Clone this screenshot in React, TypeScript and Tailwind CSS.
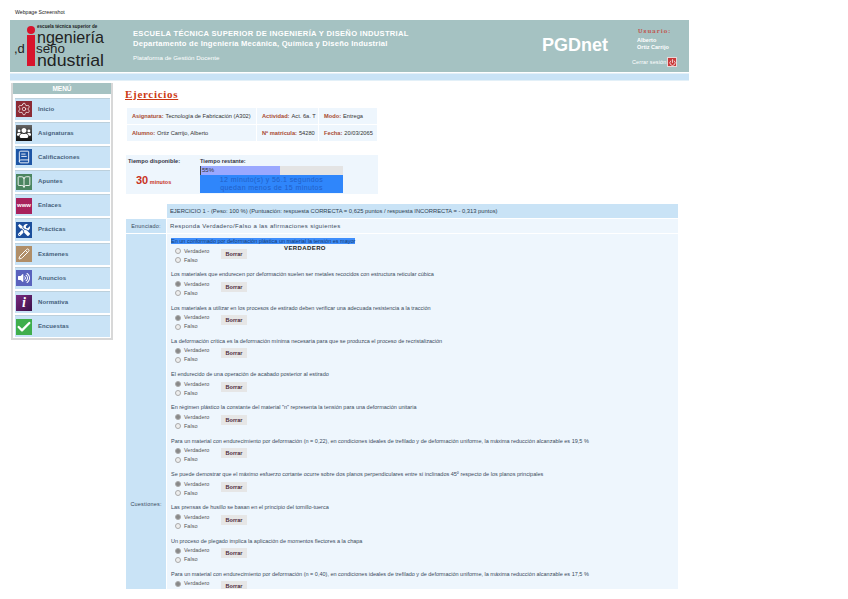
import { BookOpen, BookText, Check, Pencil, Power, Settings } from "lucide-react";
import { FaTools, FaUsers, FaVolumeUp } from "react-icons/fa";
import type { ReactNode } from "react";

const menuItems: { name: string; bg: string; icon: ReactNode }[] = [
  { name: "Inicio", bg: "bg-[#8c2b35]", icon: <Settings className="w-3.5 h-3.5 text-white/80" strokeWidth={1.5} /> },
  { name: "Asignaturas", bg: "bg-gradient-to-b from-[#666] to-[#111]", icon: <FaUsers className="w-3.5 h-3.5 text-white" /> },
  { name: "Calificaciones", bg: "bg-[#1d55a5]", icon: <BookText className="w-3.5 h-3.5 text-white" strokeWidth={1.5} /> },
  { name: "Apuntes", bg: "bg-[#4b8560]", icon: <BookOpen className="w-3.5 h-3.5 text-white" strokeWidth={1.5} /> },
  { name: "Enlaces", bg: "bg-[#a8215c]", icon: <span className="text-[6px] font-bold text-white">www</span> },
  { name: "Prácticas", bg: "bg-[#1d4f9c]", icon: <FaTools className="w-3 h-3 text-white" /> },
  { name: "Exámenes", bg: "bg-[#b08e68]", icon: <Pencil className="w-3 h-3 text-white" strokeWidth={2} /> },
  { name: "Anuncios", bg: "bg-[#5a62bd]", icon: <FaVolumeUp className="w-3 h-3 text-white" /> },
  { name: "Normativa", bg: "bg-gradient-to-br from-[#7a2a80] to-[#3c1048]", icon: <span className="font-['Liberation_Serif',serif] italic font-bold text-[14px] leading-none text-white">i</span> },
  { name: "Encuestas", bg: "bg-[#3fae4c]", icon: <Check className="w-4 h-4 text-white" strokeWidth={3.5} /> },
];

const questions = [
  "En un conformado por deformación plástica un material la tensión es mayor",
  "Los materiales que endurecen por deformación suelen ser metales recocidos con estructura reticular cúbica",
  "Los materiales a utilizar en los procesos de estirado deben verificar una adecuada resistencia a la tracción",
  "La deformación crítica es la deformación mínima necesaria para que se produzca el proceso de recristalización",
  "El endurecido de una operación de acabado posterior al estirado",
  "En régimen plástico la constante del material \"n\" representa la tensión para una deformación unitaria",
  "Para un material con endurecimiento por deformación (n = 0,22), en condiciones ideales de trefilado y de deformación uniforme, la máxima reducción alcanzable es 19,5 %",
  "Se puede demostrar que el máximo esfuerzo cortante ocurre sobre dos planos perpendiculares entre sí inclinados 45º respecto de los planos principales",
  "Las prensas de husillo se basan en el principio del tornillo-tuerca",
  "Un proceso de plegado implica la aplicación de momentos flectores a la chapa",
  "Para un material con endurecimiento por deformación (n = 0,40), en condiciones ideales de trefilado y de deformación uniforme, la máxima reducción alcanzable es 17,5 %",
];

function Logo() {
  return (
    <svg width="100" height="52" viewBox="0 0 100 52" className="shrink-0">
      <circle cx="21" cy="10" r="4" fill="#d8142c" />
      <rect x="17" y="15" width="8" height="31" fill="#d8142c" />
      <text x="27" y="8" fontSize="4.6" fontWeight="700" fill="#222" fontFamily="Liberation Sans, sans-serif">escuela técnica superior de</text>
      <text x="27" y="23" fontSize="17" textLength="67" lengthAdjust="spacingAndGlyphs" fill="#222" fontFamily="Liberation Sans, sans-serif">ngeniería</text>
      <text x="4" y="33" fontSize="13" fill="#222" fontFamily="Liberation Sans, sans-serif">,d</text>
      <text x="26" y="33" fontSize="13" textLength="29" lengthAdjust="spacingAndGlyphs" fill="#222" fontFamily="Liberation Sans, sans-serif">seño</text>
      <text x="27" y="46" fontSize="17" textLength="67" lengthAdjust="spacingAndGlyphs" fill="#222" fontFamily="Liberation Sans, sans-serif">ndustrial</text>
    </svg>
  );
}

function Header() {
  return (
    <div className="w-[679px] ml-[10px]">
      <div className="h-[52px] bg-[#a5c2c2] flex text-white">
        <div className="w-[113px] shrink-0 flex items-center">
          <Logo />
        </div>
        <div className="w-[10px] shrink-0" />
        <div className="w-[409px] shrink-0 pt-[9px]">
          <p className="text-[7.6px] leading-[10px] font-bold tracking-[0.3px] whitespace-nowrap">ESCUELA TÉCNICA SUPERIOR DE INGENIERÍA Y DISEÑO INDUSTRIAL</p>
          <p className="text-[7.6px] leading-[10px] font-bold tracking-[0.22px] whitespace-nowrap">Departamento de Ingeniería Mecánica, Química y Diseño Industrial</p>
          <p className="text-[6.2px] leading-[8px] mt-[5px] whitespace-nowrap">Plataforma de Gestión Docente</p>
        </div>
        <div className="w-[90px] shrink-0 pt-[14px] text-[18px] leading-[22px] font-bold">PGDnet</div>
        <div className="flex-1 pt-[8px] pl-[5px]">
          <p className="text-[6.5px] leading-[7px] ml-[1px] tracking-[1px] text-[#c0564f] font-serif font-bold">Usuario:</p>
          <p className="text-[5.5px] leading-[6.5px] mt-[2px] font-bold">Alberto</p>
          <p className="text-[5.5px] leading-[6.5px] font-bold">Ortiz Carrijo</p>
          <div className="flex items-center -ml-[5px] mt-[7px]">
            <span className="text-[5.5px] tracking-[0.1px] whitespace-nowrap w-[35px]">Cerrar sesión</span>
            <span className="w-[10px] h-[10px] bg-[#c93a3a] border border-[#e8d8d8] flex items-center justify-center">
              <Power className="w-[7px] h-[7px]" strokeWidth={2.5} />
            </span>
          </div>
        </div>
      </div>
      <div className="h-[8px] mt-px bg-[#c9e3f6] border-y border-[#e3f0f8]" />
    </div>
  );
}

function Sidebar() {
  return (
    <aside className="w-[102px] shrink-0 border-x-2 border-b-2 border-[#d8d8d8] h-[257px]">
      <div className="h-[11px] bg-[#a5c2c2] text-white text-[6.5px] leading-[11px] font-bold text-center">MENÚ</div>
      <div className="pl-[2px] pr-[1px] pt-[3.5px] flex flex-col gap-[2.1px]">
        {menuItems.map((item) => (
          <div key={item.name} className="h-[22.1px] bg-[#c9e3f6] border-t border-[#bcd0dc] flex items-center pl-[1px] gap-[6px]">
            <span className={`w-[16px] h-[16px] shrink-0 flex items-center justify-center ${item.bg}`}>{item.icon}</span>
            <span className="text-[6px] font-bold text-[#44607a] tracking-[0.1px]">{item.name}</span>
          </div>
        ))}
      </div>
    </aside>
  );
}

function InfoCell({ label, value, className }: { label: string; value: string; className: string }) {
  return (
    <div className={`h-[16px] bg-[#eef6fd] flex items-center pl-[5px] text-[5.7px] whitespace-nowrap ${className}`}>
      <span className="text-[#a84a30] font-bold mr-[2px]">{label}</span>
      <span className="text-[#333]">{value}</span>
    </div>
  );
}

function Timer() {
  return (
    <div className="mt-[14px] ml-[1px] w-[252px] h-[39px] bg-[#eef6fd] flex text-[5.7px]">
      <div className="w-[74px] shrink-0 pl-[2px] pt-[2px]">
        <p className="text-[#334] font-bold whitespace-nowrap">Tiempo disponible:</p>
        <p className="mt-[7px] pl-[8px] text-[#c8321e] font-bold whitespace-nowrap">
          <span className="text-[11px] leading-[14px]">30</span> <span className="text-[5.5px]">minutos</span>
        </p>
      </div>
      <div className="w-[143px] shrink-0 pt-[2px]">
        <p className="text-[#334] font-bold leading-[8px]">Tiempo restante:</p>
        <div className="h-[9px] bg-[#e4e4e4] flex mt-[1px]">
          <div className="w-[80px] h-full bg-[#9aa8ff] border-l border-[#444] text-[#333] text-[6px] leading-[8px] pl-px">55%</div>
        </div>
        <div className="h-[18px] bg-[#2f86fb] text-[#2260c8] text-[7px] leading-[8px] text-center pt-px tracking-[0.4px] whitespace-nowrap">
          <p>12 minuto(s) y 56.1 segundos</p>
          <p>quedan menos de 15 minutos</p>
        </div>
      </div>
    </div>
  );
}

function Question({ text, first }: { text: string; first: boolean }) {
  return (
    <div className="h-[33.3px]">
      <p className="text-[5.5px] leading-[7px] whitespace-nowrap">
        <span className={first ? "bg-[#3f8efb] text-[#123a70]" : "text-[#3a4a5c]"}>{text}</span>
      </p>
      <div className="relative flex items-start pl-[4px] pt-[1.5px] gap-[10px]">
        <div className="w-[36px] text-[5.5px] text-[#555] leading-[9px]">
          <div className="flex items-center gap-[3px] whitespace-nowrap">
            <span className={`w-[6px] h-[6px] rounded-full border border-[#aaa] ${first ? "bg-[#eee]" : "bg-[#888]"}`} />
            <span>Verdadero</span>
          </div>
          <div className="flex items-center gap-[3px]">
            <span className="w-[6px] h-[6px] rounded-full border border-[#aaa] bg-[#eee]" />
            <span>Falso</span>
          </div>
        </div>
        <div className="mt-[2px] w-[26px] h-[10px] bg-[#e6e6e6] text-[5.5px] font-bold leading-[10px] text-center text-[#4a2a3a]">Borrar</div>
        {first && <span className="absolute left-[113px] -top-[1px] text-[6px] font-bold tracking-[0.4px] text-[#222]">VERDADERO</span>}
      </div>
    </div>
  );
}

function Exercise() {
  return (
    <div className="mt-[10px] ml-[1px] w-[552px] flex flex-col gap-px">
      <div className="flex">
        <div className="w-[41px] shrink-0" />
        <div className="flex-1 h-[14px] bg-[#c9e3f6] pl-[3px] text-[5.8px] leading-[14px] text-[#2e3e50] whitespace-nowrap">
          EJERCICIO 1 - (Peso: 100 %) (Puntuación: respuesta CORRECTA = 0,625 puntos / respuesta INCORRECTA = - 0,313 puntos)
        </div>
      </div>
      <div className="flex gap-px">
        <div className="w-[40px] shrink-0 h-[14px] bg-[#c9e3f6] text-[5.5px] leading-[14px] text-center text-[#3a4a5c] tracking-[0.2px]">Enunciado:</div>
        <div className="flex-1 h-[14px] bg-[#eef6fd] pl-[3px] text-[6px] tracking-[0.35px] leading-[14px] text-[#3a4a5c]">Responda Verdadero/Falso a las afirmaciones siguientes</div>
      </div>
      <div className="flex gap-px h-[355px]">
        <div className="w-[40px] shrink-0 bg-[#c9e3f6] text-[5.5px] text-[#3a4a5c] text-center tracking-[0.2px] pt-[266px]">Cuestiones:</div>
        <div className="flex-1 bg-[#eef6fd] pl-[4px] pt-[4px] overflow-hidden">
          {questions.map((q, i) => (
            <Question key={q} text={q} first={i === 0} />
          ))}
        </div>
      </div>
    </div>
  );
}

export default function App() {
  return (
    <div className="w-[848px] h-[599px] overflow-hidden bg-white font-['Liberation_Sans',sans-serif]">
      <p className="h-[20px] pl-[15px] pt-[8px] text-[5.2px] leading-[8px] text-[#222]">Webpage Screenshot</p>
      <Header />
      <div className="flex mt-[2px] ml-[11px]">
        <Sidebar />
        <main className="pl-[12px]">
          <h1 className="mt-[4px] h-[15px] font-['Liberation_Serif',serif] text-[11px] leading-[15px] font-bold underline tracking-[0.7px] text-[#cc3a14]">Ejercicios</h1>
          <div className="ml-[2px] mt-[6px] w-[250px] flex flex-col gap-px">
            <div className="flex gap-px">
              <InfoCell className="w-[129px]" label="Asignatura:" value="Tecnología de Fabricación (A302)" />
              <InfoCell className="w-[61px]" label="Actividad:" value="Act. 6a. T" />
              <InfoCell className="flex-1" label="Modo:" value="Entrega" />
            </div>
            <div className="flex gap-px">
              <InfoCell className="w-[129px]" label="Alumno:" value="Ortiz Carrijo, Alberto" />
              <InfoCell className="w-[61px]" label="Nº matrícula:" value="54280" />
              <InfoCell className="flex-1" label="Fecha:" value="20/03/2065" />
            </div>
          </div>
          <Timer />
          <Exercise />
        </main>
      </div>
    </div>
  );
}
